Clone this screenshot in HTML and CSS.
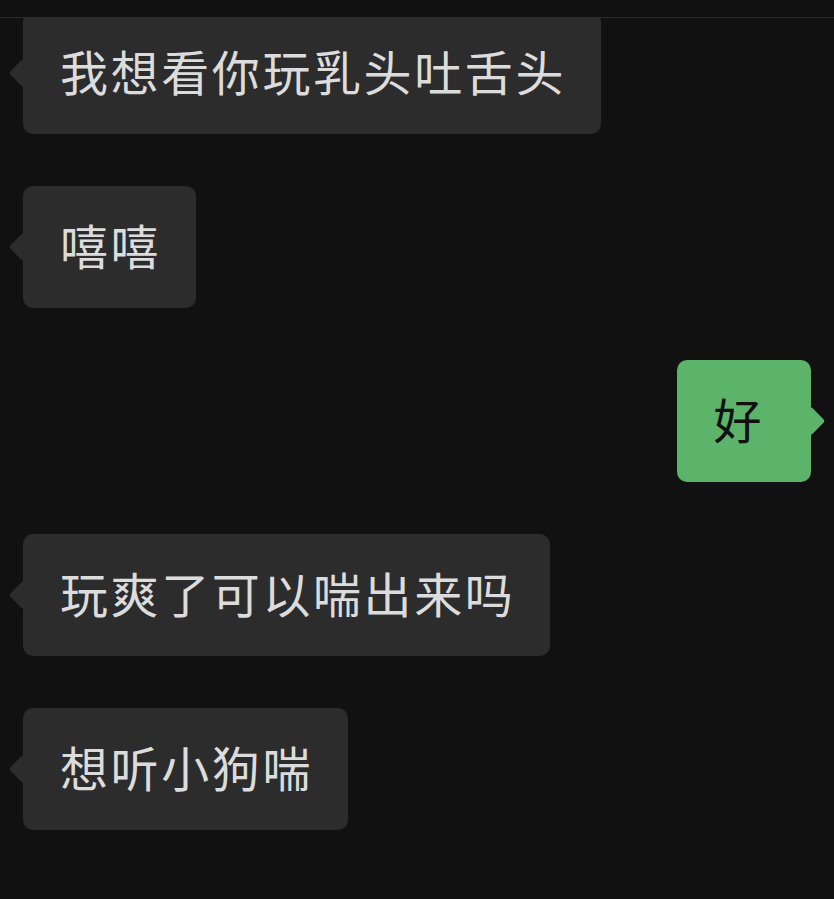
FILE: index.html
```html
<!DOCTYPE html>
<html lang="zh-CN">
<head>
<meta charset="utf-8">
<link rel="stylesheet" href="styles.css">
</head>
<body>
<div class="header"></div>
<div class="chat">
  <div class="row left first"><div class="bubble gray">我想看你玩乳头吐舌头</div></div>
  <div class="row left"><div class="bubble gray">嘻嘻</div></div>
  <div class="row right"><div class="bubble green">好</div></div>
  <div class="row left"><div class="bubble gray">玩爽了可以喘出来吗</div></div>
  <div class="row left"><div class="bubble gray">想听小狗喘</div></div>
</div>
</body>
</html>
```
FILE: styles.css
```css
html, body {
  margin: 0;
  padding: 0;
  background: #111111;
}
body {
  width: 834px;
  height: 899px;
  overflow: hidden;
  font-family: "Noto Sans CJK SC", "Noto Sans", sans-serif;
}
.header {
  height: 17px;
  border-bottom: 1px solid #2a2a2a;
}
.chat {
  display: flex;
  flex-direction: column;
  gap: 52px;
  overflow: hidden;
  height: 881px;
}
.row {
  display: flex;
  padding: 0 23px;
}
.row.first {
  margin-top: -6px;
}
.row.right {
  justify-content: flex-end;
}
.bubble {
  position: relative;
  height: 122px;
  box-sizing: border-box;
  padding: 0 35px 6px 37px;
  display: flex;
  align-items: center;
  border-radius: 10px;
  font-size: 48px;
  letter-spacing: 2.6px;
  line-height: 1;
}
.bubble::before {
  content: "";
  position: absolute;
  top: 50%;
  width: 21px;
  height: 21px;
  border-radius: 3px;
  transform: translateY(-50%) rotate(45deg);
  background: inherit;
}
.gray {
  background: #2c2c2c;
  color: #dcdcdc;
}
.gray::before {
  left: -10px;
}
.green {
  background: #5bb46a;
  color: #111111;
  padding: 0 47px 6px 36px;
}
.green::before {
  right: -10px;
}
```
